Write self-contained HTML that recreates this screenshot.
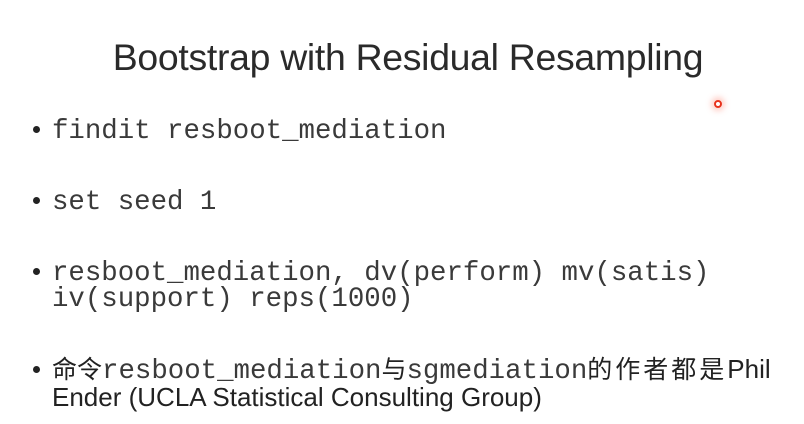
<!DOCTYPE html>
<html><head><meta charset="utf-8"><style>
body{margin:0;width:804px;height:424px;background:#fff;position:relative;overflow:hidden;color:#222}
.t{position:absolute;left:6px;width:804px;top:36px;text-align:center;font:300 37.4px "Liberation Sans",sans-serif;letter-spacing:-0.3px;color:#2a2a2a}
.l{position:absolute;left:52px;font:27.4px "Liberation Mono",monospace;white-space:nowrap;line-height:27px;color:#3a3a3a}
.b{position:absolute;left:33px;width:7px;height:7px;border-radius:50%;background:#222}
.s{font-family:"Liberation Sans","Noto Sans CJK SC",sans-serif;font-size:26px;color:#222}
.dot{position:absolute;left:714px;top:100px;width:8px;height:8px;border-radius:50%;border:2px solid #e8321c;box-sizing:border-box;box-shadow:0 0 6px 3px rgba(255,120,100,.35)}
</style></head><body>
<div class="t">Bootstrap with Residual Resampling</div>
<div class="dot"></div>
<div class="b" style="top:126px"></div><div class="l" style="top:118px">findit resboot_mediation</div>
<div class="b" style="top:197px"></div><div class="l" style="top:189px">set seed 1</div>
<div class="b" style="top:268px"></div><div class="l" style="top:260px">resboot_mediation, dv(perform) mv(satis)</div>
<div class="l" style="top:286px">iv(support) reps(1000)</div>
<div class="b" style="top:366px"></div><div class="l" style="top:356px"><span class="s" style="font-size:25px">命令</span>resboot_mediation<span class="s" style="font-size:25px">与</span>sgmediation<span class="s" style="font-size:25px;letter-spacing:3px">的作者都是</span><span class="s">Phil</span></div>
<div class="l s" style="top:384px">Ender (UCLA Statistical Consulting Group)</div>
</body></html>
